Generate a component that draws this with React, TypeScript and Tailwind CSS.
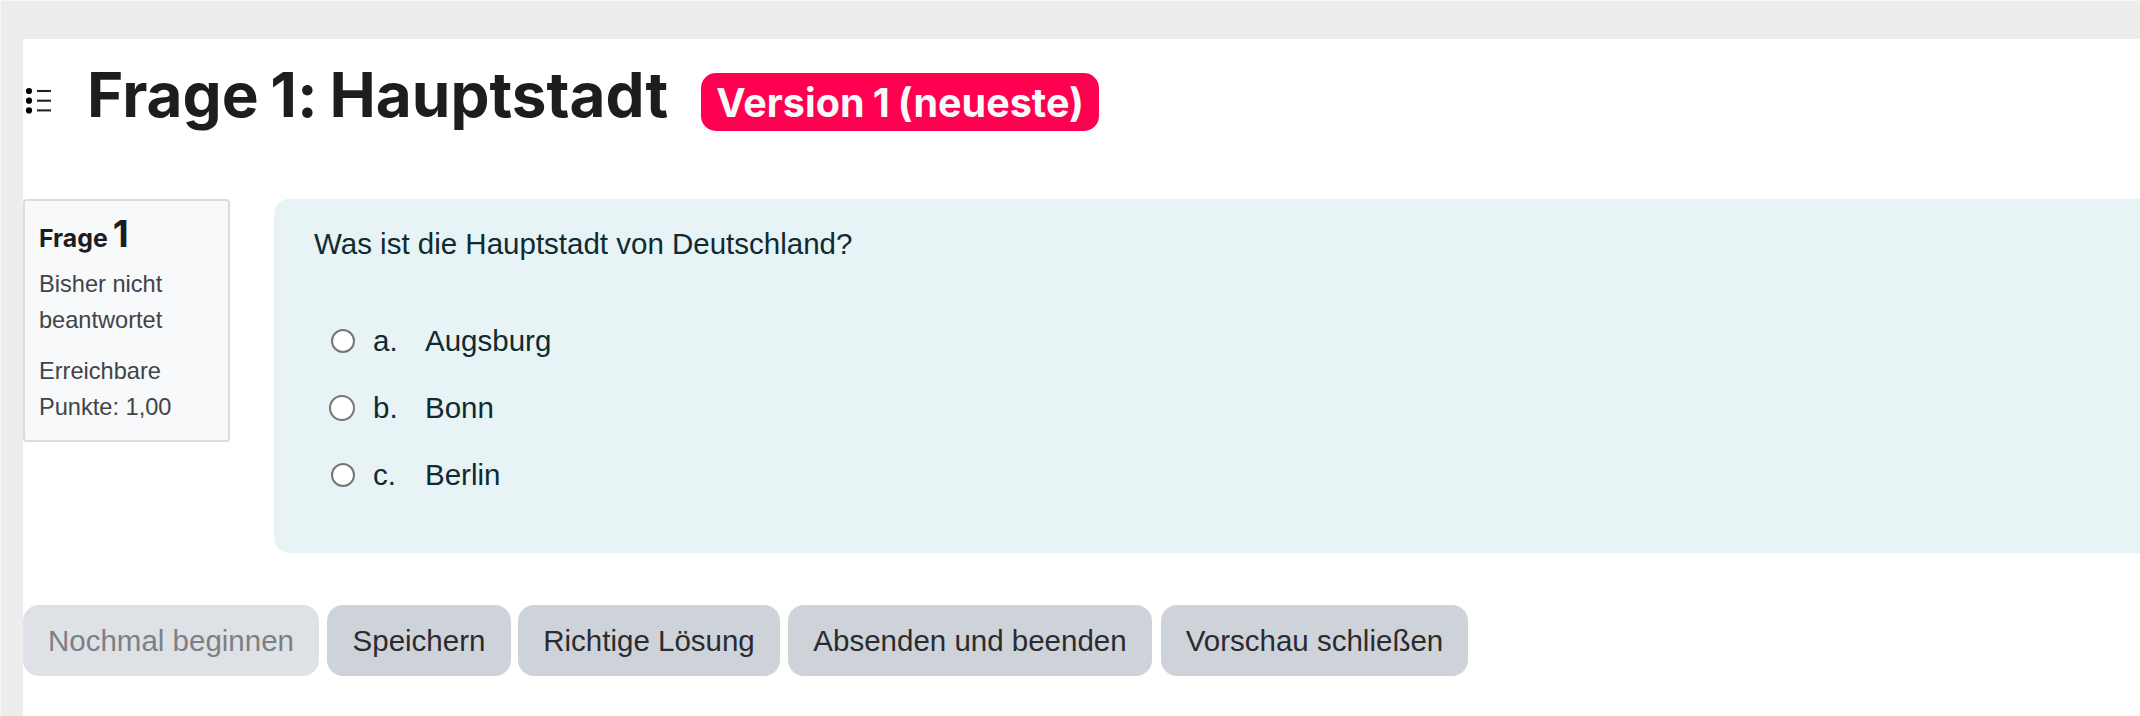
const answers = [
  { letter: "a.", text: "Augsburg", radio: "size-[24px]" },
  { letter: "b.", text: "Bonn", radio: "-ml-[1px] size-[26px]" },
  { letter: "c.", text: "Berlin", radio: "size-[24px]" },
];

const buttons = [
  { label: "Nochmal beginnen", className: "w-[296px] mr-[8px] bg-[#dee1e6] text-[#7d8083]" },
  { label: "Speichern", className: "w-[184px] mr-[7px] bg-[#ced3da] text-[#2b2b2f]" },
  { label: "Richtige Lösung", className: "w-[262px] mr-[8px] bg-[#ced3da] text-[#2b2b2f]" },
  { label: "Absenden und beenden", className: "w-[364px] mr-[9px] bg-[#ced3da] text-[#2b2b2f]" },
  { label: "Vorschau schließen", className: "w-[307px] bg-[#ced3da] text-[#2b2b2f]" },
];

function ListIcon() {
  return (
    <svg className="mt-[46px] ml-[2px] h-[30px] w-[28px] shrink-0" viewBox="0 0 28 30">
      {[6, 15.7, 25.4].map((y) => (
        <g key={y}>
          <circle cx="4" cy={y} r="3.1" fill="#000" />
          <path d={`M12 ${y}H26`} stroke="#222" strokeWidth="2.1" />
        </g>
      ))}
    </svg>
  );
}

export default function App() {
  return (
    <div className="h-[716px] w-[2140px] overflow-hidden border-t border-l border-[#f7f7f7] bg-[#ededed] pt-[38px] pl-[22px] font-['Liberation_Sans',Arial,sans-serif]">
      <main className="h-full bg-white">
        <header className="flex h-[160px] items-start">
          <ListIcon />
          <h1 className="mt-[18px] ml-[34px] w-[583px] font-['Inter',sans-serif] text-[62px] leading-[75px] font-bold whitespace-nowrap text-[#1d1d1f] [font-feature-settings:'calt'_0] [word-spacing:-3px]">
            Frage 1: Hauptstadt
          </h1>
          <span className="mt-[34px] ml-[31px] flex h-[58px] w-[398px] items-center justify-center rounded-[15px] bg-[#ff0050] pt-[3px] font-['Inter',sans-serif] text-[39.5px] leading-none font-bold whitespace-nowrap text-[#f8f9fa] [font-feature-settings:'calt'_0] [word-spacing:-1.2px]">
            Version 1 (neueste)
          </span>
        </header>

        <section className="flex items-start gap-[44px]">
          <aside className="h-[243px] w-[207px] shrink-0 rounded-[4px] border-2 border-[#d9dde3] bg-[#f8f9fb] pt-[11px] pl-[14px] text-[23.6px] leading-[36px] text-[#414446]">
            <h2 className="flex items-baseline font-['Inter',sans-serif] leading-[44px] font-bold text-[#1d1d1f]">
              <span className="text-[24.8px]">Frage</span>
              <span className="ml-[5px] text-[37px]">1</span>
            </h2>
            <p className="mt-[6px]">Bisher nicht beantwortet</p>
            <p className="mt-[15px]">Erreichbare Punkte: 1,00</p>
          </aside>

          <div className="h-[354px] flex-1 rounded-l-[15px] bg-[#e7f3f5] pt-[23px] pl-[40px] text-[29.5px] leading-[44px] text-[#0f2a31]">
            <p>Was ist die Hauptstadt von Deutschland?</p>
            <div className="mt-[41px]">
              {answers.map((answer) => (
                <label key={answer.letter} className="flex h-[67px] items-center">
                  <span className="flex w-[59px] justify-center pr-[2px]">
                    <span className={`rounded-full border-2 border-[#767676] bg-white ${answer.radio}`} />
                  </span>
                  <span className="w-[52px]">{answer.letter}</span>
                  <span>{answer.text}</span>
                </label>
              ))}
            </div>
          </div>
        </section>

        <div className="mt-[52px] flex">
          {buttons.map((button) => (
            <button
              key={button.label}
              type="button"
              className={`h-[71px] shrink-0 rounded-[16px] text-[29.5px] leading-none whitespace-nowrap ${button.className}`}
            >
              {button.label}
            </button>
          ))}
        </div>
      </main>
    </div>
  );
}
